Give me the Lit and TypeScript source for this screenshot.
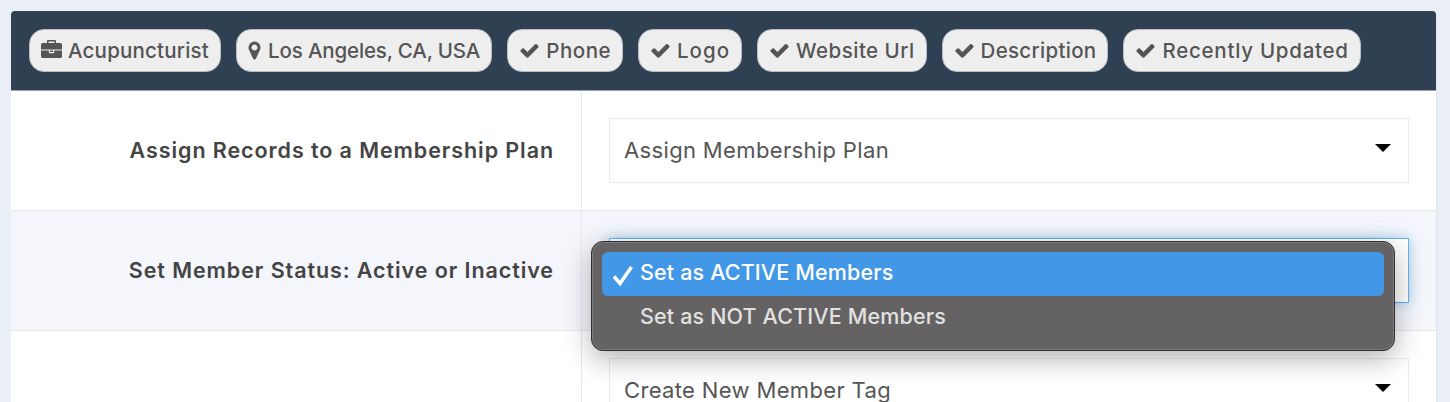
import { LitElement, html, css, svg } from 'lit'
import { customElement } from 'lit/decorators.js'

const ICONS = {
  briefcase: svg`<path d="M640 256h512v-128h-512v128zm1152 640v480q0 66-47 113t-113 47h-1472q-66 0-113-47t-47-113v-480h672v160q0 26 19 45t45 19h320q26 0 45-19t19-45v-160h672zm-768 0v128h-256v-128h256zm768-480v384h-1792v-384q0-66 47-113t113-47h352v-160q0-40 28-68t68-28h576q40 0 68 28t28 68v160h352q66 0 113 47t47 113z"/>`,
  marker: svg`<path d="M1152 640q0-106-75-181t-181-75-181 75-75 181 75 181 181 75 181-75 75-181zm256 0q0 109-33 179l-364 774q-16 33-47.5 52t-67.5 19-67.5-19-46.5-52l-365-774q-33-70-33-179 0-212 150-362t362-150 362 150 150 362z"/>`,
  check: svg`<path d="M1671 566q0 40-28 68l-724 724-136 136q-28 28-68 28t-68-28l-136-136-362-362q-28-28-28-68t28-68l136-136q28-28 68-28t68 28l294 295 656-657q28-28 68-28t68 28l136 136q28 28 28 68z"/>`,
}

// tracking evens out each label's width, the installed font runs narrower than the original
const PILLS: { icon: keyof typeof ICONS; label: string; tracking: number }[] = [
  { icon: 'briefcase', label: 'Acupuncturist', tracking: 0.2 },
  { icon: 'marker', label: 'Los Angeles, CA, USA', tracking: -0.15 },
  { icon: 'check', label: 'Phone', tracking: 0.5 },
  { icon: 'check', label: 'Logo', tracking: 1 },
  { icon: 'check', label: 'Website Url', tracking: 0.47 },
  { icon: 'check', label: 'Description', tracking: 0.3 },
  { icon: 'check', label: 'Recently Updated', tracking: 0.74 },
]

@customElement('app-root')
export class AppRoot extends LitElement {
  static styles = css`
    :host {
      display: block;
      position: relative;
      height: 402px;
      overflow: hidden;
      box-sizing: border-box;
      padding: 11px 13px 0 11px;
      background: #e9eef7;
      font-family: 'Inter', 'Lato', sans-serif;
      color: #555;
    }

    .card {
      background: #fff;
      border-radius: 4px 4px 0 0;
      border-right: 1px solid #dfe2e6;
    }

    .header {
      display: flex;
      gap: 15px;
      height: 80px;
      box-sizing: border-box;
      padding: 18px;
      background: #2e4052;
      border-radius: 4px 4px 0 0;
      border-bottom: 1px solid #9aa3ad;
    }

    .pill {
      display: flex;
      align-items: center;
      gap: 6px;
      height: 43px;
      box-sizing: border-box;
      padding: 0 11px;
      border: 1px solid #b9bcc0;
      border-radius: 15px;
      background: #eee;
      font-size: 20.5px;
      font-weight: 500;
      white-space: nowrap;
    }

    .pill svg {
      height: 21px;
      width: 21px;
      fill: #555;
      flex: none;
    }

    .pill svg.marker {
      margin: 0 -3px 0 -4px;
    }

    .row {
      display: grid;
      grid-template-columns: 571px 1fr;
      height: 120px;
      border-bottom: 1px solid #e6e8eb;
      box-sizing: border-box;
    }

    .row.alt {
      background: #f4f6fb;
    }

    .label {
      display: flex;
      align-items: center;
      justify-content: flex-end;
      padding: 0 27px 2px 0;
      border-right: 1px solid #e6e8eb;
      font-size: 21.5px;
      font-weight: 600;
      letter-spacing: 0.92px;
      color: #444;
    }

    .field {
      padding: 27px 27px 0 27px;
    }

    .select {
      display: flex;
      align-items: center;
      justify-content: space-between;
      height: 65px;
      box-sizing: border-box;
      padding: 0 17px 2px 14px;
      background: #fff;
      border: 1px solid #ebebeb;
      font-size: 22px;
      letter-spacing: 0.35px;
      color: #555;
    }

    .select.focus {
      border-color: #66b3ee;
      box-shadow: 0 0 12px rgba(102, 175, 233, 0.6);
    }

    .arrow {
      width: 0;
      height: 0;
      margin-top: -4px;
      border-left: 8px solid transparent;
      border-right: 8px solid transparent;
      border-top: 8px solid #000;
    }

    .menu {
      position: absolute;
      left: 591px;
      top: 241px;
      width: 804px;
      height: 110px;
      box-sizing: border-box;
      padding: 10px;
      background: #656263;
      border: 1px solid #2e2e2e;
      border-radius: 12px;
      box-shadow:
        inset 0 0 0 1px #7d7b7c,
        0 8px 28px rgba(0, 0, 0, 0.3);
      font-size: 21.5px;
      font-weight: 500;
      letter-spacing: 0.15px;
    }

    .option {
      display: flex;
      align-items: center;
      height: 44px;
      box-sizing: border-box;
      padding: 0 0 5px 38px;
      border-radius: 6px;
      color: #e2e1e1;
      position: relative;
    }

    .option.active {
      background: #4298e6;
      color: #fff;
    }

    .tick {
      position: absolute;
      left: 11px;
      top: 14px;
      width: 20px;
      height: 20px;
      fill: none;
      stroke: #fff;
      stroke-width: 3.5;
    }
  `

  private renderSelect(text: string, focus = false) {
    return html`
      <div class="select ${focus ? 'focus' : ''}">
        <span>${text}</span>
        <span class="arrow"></span>
      </div>
    `
  }

  render() {
    return html`
      <div class="card">
        <div class="header">
          ${PILLS.map(
            (p) => html`
              <span class="pill" style="letter-spacing: ${p.tracking}px">
                <svg class=${p.icon} viewBox="0 0 1792 1792">${ICONS[p.icon]}</svg>
                ${p.label}
              </span>
            `,
          )}
        </div>
        <div class="row">
          <div class="label">Assign Records to a Membership Plan</div>
          <div class="field">${this.renderSelect('Assign Membership Plan')}</div>
        </div>
        <div class="row alt">
          <div class="label">Set Member Status: Active or Inactive</div>
          <div class="field">${this.renderSelect('Set as ACTIVE Members', true)}</div>
        </div>
        <div class="row">
          <div class="label"></div>
          <div class="field">${this.renderSelect('Create New Member Tag')}</div>
        </div>
      </div>
      <div class="menu">
        <div class="option active">
          <svg class="tick" viewBox="0 0 20 20"><path d="M1 10.5l6 7L18.5 1" /></svg>
          Set as ACTIVE Members
        </div>
        <div class="option">Set as NOT ACTIVE Members</div>
      </div>
    `
  }
}
